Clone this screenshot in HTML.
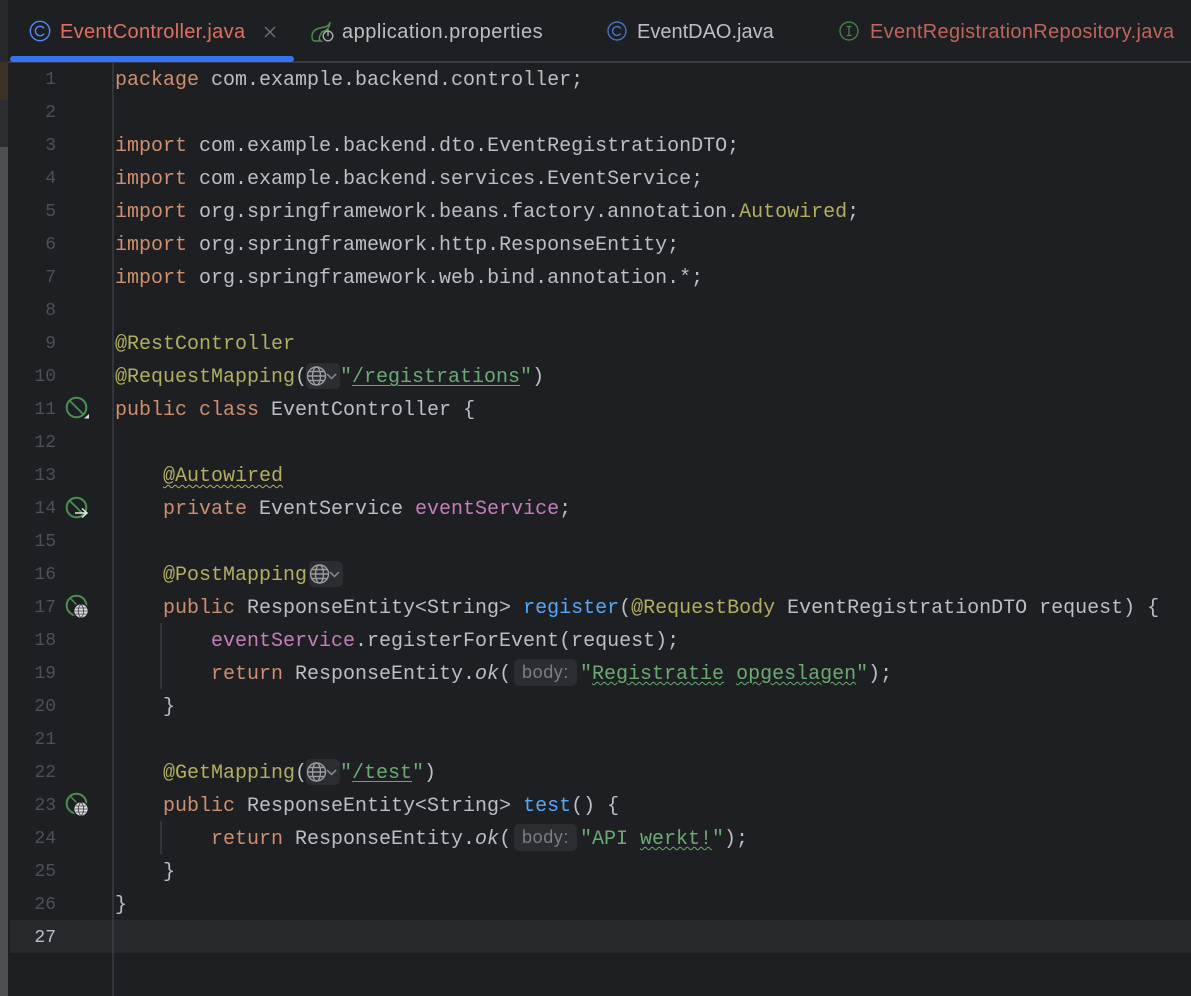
<!DOCTYPE html>
<html><head><meta charset="utf-8"><style>
html,body{margin:0;padding:0;width:1191px;height:996px;overflow:hidden;background:#1e1f22}
.a{position:absolute}
.l{position:absolute;white-space:pre;font:20px/33px "Liberation Mono","DejaVu Sans Mono",monospace;color:#bcbec4;height:33px;margin-top:1px}
.n{position:absolute;left:10px;width:46px;text-align:right;font:18px/33px "Liberation Mono",monospace;color:#4b5059;height:33px;margin-top:1px}
.t{position:absolute;top:19px;white-space:pre;font:20px/26px "Liberation Sans",sans-serif;color:#bcbec4;letter-spacing:.32px}
.k{color:#cf8e6d}.an{color:#b3ae60}.s{color:#6aab73}.f{color:#56a8f5}.m{color:#c77dbb}
.i{font-style:italic}
.u{text-decoration:underline;text-decoration-color:#8a8d93;text-underline-offset:3px;text-decoration-thickness:1px}
.wg{text-decoration:underline wavy #6aab73 1px;text-underline-offset:2px}
.wy{text-decoration:underline wavy #b3ae60 1px;text-underline-offset:3px}
.inl{position:absolute;width:63px;height:27px;border-radius:5px;background:#2b2d30;color:#7a7e85;font:18px/26px "Liberation Sans",sans-serif;text-align:center;letter-spacing:.6px}
.gb{position:absolute;width:34px;height:26px;border-radius:5px;background:#2b2d30}
</style></head><body>
<div class="a" style="left:0;top:0;width:8px;height:62px;background:#26282b"></div>
<div class="a" style="left:0;top:62px;width:8px;height:38px;background:#3b3024"></div>
<div class="a" style="left:0;top:100px;width:8px;height:47px;background:#2b2d30"></div>
<div class="a" style="left:0;top:147px;width:8px;height:849px;background:#4d4e51"></div>
<div class="a" style="left:8px;top:61px;width:1183px;height:2px;background:#393b40"></div>
<div class="a" style="left:10px;top:56px;width:284px;height:6px;border-radius:3px;background:#3574f0"></div>
<div class="a" style="left:112px;top:63px;width:2px;height:933px;background:#313438"></div>
<div class="a" style="left:10px;top:920px;width:1181px;height:33px;background:#26282c"></div>
<div class="a" style="left:112px;top:920px;width:2px;height:33px;background:#37393e"></div>
<div class="a" style="left:160px;top:623px;width:2px;height:66px;background:#313438"></div>
<div class="a" style="left:160px;top:821px;width:2px;height:33px;background:#313438"></div>

<svg class="a" style="left:29px;top:20px" width="22" height="22" fill="none"><circle cx="11" cy="11" r="9.7" stroke="#548af7" stroke-width="1.4"/><path d="M15 8.4A4.7 4.7 0 1 0 15 13.6" stroke="#548af7" stroke-width="1.4"/></svg>
<div class="t" style="left:60px;color:#e0705f">EventController.java</div>
<svg class="a" style="left:263px;top:25px" width="14" height="14" stroke="#6f737a" stroke-width="1.3"><path d="M2 2L12 12M12 2L2 12"/></svg>
<svg class="a" style="left:310px;top:20px" width="26" height="24" fill="none"><path d="M20 2C19 7 15 7 10 8C5 9 2 12 2 17C2 19 3 21 5 21H11C8 19 9 17 12 12C15 11 20 9 20 2Z" stroke="#4e8a50" stroke-width="1.5"/><circle cx="18" cy="16" r="4.8" stroke="#a8abb0" stroke-width="1.4"/><path d="M18 9.5V16" stroke="#a8abb0" stroke-width="1.4"/></svg>
<div class="t" style="left:342px;letter-spacing:.5px">application.properties</div>
<svg class="a" style="left:606px;top:20px" width="22" height="22" fill="none"><circle cx="11" cy="11" r="9" stroke="#4a72bd" stroke-width="1.4"/><path d="M14.6 8.5A4.4 4.4 0 1 0 14.6 13.5" stroke="#4a72bd" stroke-width="1.4"/></svg>
<div class="t" style="left:637px;letter-spacing:0">EventDAO.java</div>
<svg class="a" style="left:838px;top:20px" width="22" height="22" fill="none"><circle cx="11" cy="11" r="9" stroke="#4a7d4f" stroke-width="1.4"/><path d="M8.5 6.5H13.5M8.5 15.5H13.5M11 6.5V15.5" stroke="#4a7d4f" stroke-width="1.3"/></svg>
<div class="t" style="left:870px;color:#c0645a">EventRegistrationRepository.java</div>

<div class="n" style="top:63px">1</div><div class="n" style="top:96px">2</div><div class="n" style="top:129px">3</div><div class="n" style="top:162px">4</div><div class="n" style="top:195px">5</div><div class="n" style="top:228px">6</div><div class="n" style="top:261px">7</div><div class="n" style="top:294px">8</div><div class="n" style="top:327px">9</div><div class="n" style="top:360px">10</div><div class="n" style="top:393px">11</div><div class="n" style="top:426px">12</div><div class="n" style="top:459px">13</div><div class="n" style="top:492px">14</div><div class="n" style="top:525px">15</div><div class="n" style="top:558px">16</div><div class="n" style="top:591px">17</div><div class="n" style="top:624px">18</div><div class="n" style="top:657px">19</div><div class="n" style="top:690px">20</div><div class="n" style="top:723px">21</div><div class="n" style="top:756px">22</div><div class="n" style="top:789px">23</div><div class="n" style="top:822px">24</div><div class="n" style="top:855px">25</div><div class="n" style="top:888px">26</div><div class="n" style="top:921px;color:#bcbec4">27</div>

<div class="l" style="left:115px;top:63px"><span class="k">package</span> com.example.backend.controller;</div>
<div class="l" style="left:115px;top:129px"><span class="k">import</span> com.example.backend.dto.EventRegistrationDTO;</div>
<div class="l" style="left:115px;top:162px"><span class="k">import</span> com.example.backend.services.EventService;</div>
<div class="l" style="left:115px;top:195px"><span class="k">import</span> org.springframework.beans.factory.annotation.<span class="an">Autowired</span>;</div>
<div class="l" style="left:115px;top:228px"><span class="k">import</span> org.springframework.http.ResponseEntity;</div>
<div class="l" style="left:115px;top:261px"><span class="k">import</span> org.springframework.web.bind.annotation.*;</div>
<div class="l an" style="left:115px;top:327px">@RestController</div>
<div class="l" style="left:115px;top:360px"><span class="an">@RequestMapping</span>(</div>
<div class="gb" style="left:306px;top:363px"></div>
<div class="l" style="left:340px;top:360px"><span class="s">"<span class="u">/registrations</span>"</span>)</div>
<div class="l" style="left:115px;top:393px"><span class="k">public class</span> EventController {</div>
<div class="l an" style="left:163px;top:459px"><span class="wy">@Autowired</span></div>
<div class="l" style="left:163px;top:492px"><span class="k">private</span> EventService <span class="m">eventService</span>;</div>
<div class="gb" style="left:309px;top:561px"></div>
<div class="l an" style="left:163px;top:558px">@PostMapping</div>
<div class="l" style="left:163px;top:591px"><span class="k">public</span> ResponseEntity&lt;String&gt; <span class="f">register</span>(<span class="an">@RequestBody</span> EventRegistrationDTO request) {</div>
<div class="l" style="left:211px;top:624px"><span class="m">eventService</span>.registerForEvent(request);</div>
<div class="l" style="left:211px;top:657px"><span class="k">return</span> ResponseEntity.<span class="i">ok</span>(</div>
<div class="inl" style="left:514px;top:659px">body:</div>
<div class="l" style="left:580px;top:657px"><span class="s">"<span class="wg">Registratie</span> <span class="wg">opgeslagen</span>"</span>);</div>
<div class="l" style="left:163px;top:690px">}</div>
<div class="l" style="left:163px;top:756px"><span class="an">@GetMapping</span>(</div>
<div class="gb" style="left:306px;top:759px"></div>
<div class="l" style="left:340px;top:756px"><span class="s">"<span class="u">/test</span>"</span>)</div>
<div class="l" style="left:163px;top:789px"><span class="k">public</span> ResponseEntity&lt;String&gt; <span class="f">test</span>() {</div>
<div class="l" style="left:211px;top:822px"><span class="k">return</span> ResponseEntity.<span class="i">ok</span>(</div>
<div class="inl" style="left:514px;top:824px">body:</div>
<div class="l" style="left:580px;top:822px"><span class="s">"API <span class="wg">werkt!</span>"</span>);</div>
<div class="l" style="left:163px;top:855px">}</div>
<div class="l" style="left:115px;top:888px">}</div>

<svg class="a" style="left:0;top:0;pointer-events:none" width="1191" height="996" fill="none">
<defs>
<g id="gl" stroke="#9a9ca1" stroke-width="1.4"><circle cx="0" cy="0" r="9"/><ellipse cx="0" cy="0" rx="4" ry="9"/><path d="M-9 0H9M-8 -4.500H8M-8 4.500H8"/></g>
<path id="ch" d="M0 0L4.500 4.500L9 0" stroke="#8a8d93" stroke-width="1.500"/>
<g id="sg"><circle cx="0" cy="0" r="6.600" fill="#dcdde0"/><g stroke="#3a3b3e" stroke-width=".8"><ellipse cx="0" cy="0" rx="2.600" ry="6.200"/><path d="M-6 0H6M-5.400 -3H5.400M-5.400 3H5.400"/></g></g>
</defs>
<use href="#gl" x="316.500" y="376"/><use href="#ch" x="327" y="374"/>
<use href="#gl" x="319.500" y="574"/><use href="#ch" x="330" y="572"/>
<use href="#gl" x="316.500" y="772"/><use href="#ch" x="327" y="770"/>
<circle cx="76.500" cy="407.500" r="9.800" stroke="#4a9053" stroke-width="2"/><path d="M70 401L83 414" stroke="#4a9053" stroke-width="1.800"/><path d="M89 414V418.500H84Z" fill="#dfe1e5"/>
<circle cx="76.500" cy="507.500" r="9.800" stroke="#4a9053" stroke-width="2"/><path d="M70 501L82 513" stroke="#4a9053" stroke-width="1.800"/><path d="M75 513H86M82 508.500L87 513L82 517.500" stroke="#e4e5e8" stroke-width="1.500"/>
<circle cx="76.500" cy="605.500" r="9.800" stroke="#4a9053" stroke-width="2"/><path d="M71 599L78 606" stroke="#4a9053" stroke-width="1.500"/><circle cx="81" cy="611" r="8" fill="#1e1f22"/><use href="#sg" x="81" y="611"/>
<circle cx="76.500" cy="803.500" r="9.800" stroke="#4a9053" stroke-width="2"/><path d="M71 797L78 804" stroke="#4a9053" stroke-width="1.500"/><circle cx="81" cy="809" r="8" fill="#1e1f22"/><use href="#sg" x="81" y="809"/>
</svg>
</body></html>
